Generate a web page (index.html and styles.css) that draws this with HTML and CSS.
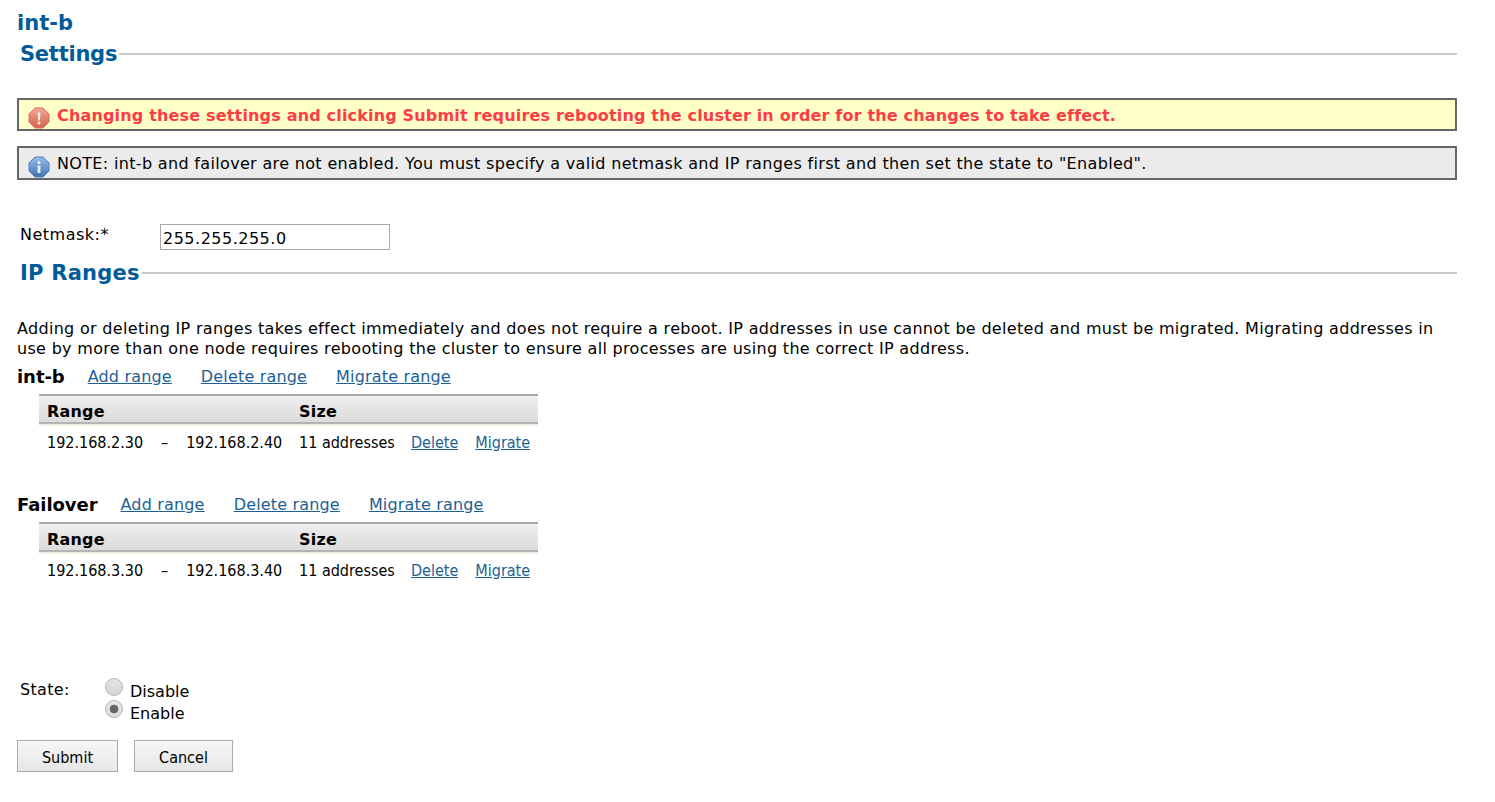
FILE: index.html
```html
<!DOCTYPE html>
<html lang="en">

<head>
    <meta charset="UTF-8">
    <title>int-b Settings</title>
    <link rel="stylesheet" href="styles.css">
</head>

<body>
    <h1 class="page-title">int-b</h1>

    <div class="section-head section-head-settings">
        <h2>Settings</h2>
        <span class="section-line"></span>
    </div>

    <div class="notice notice-warn">
        <svg class="notice-icon" viewBox="0 0 24 24" width="24" height="24">
            <defs>
                <linearGradient id="warnFill" x1="0" y1="0" x2="0" y2="1">
                    <stop offset="0" stop-color="#efa999" />
                    <stop offset="0.6" stop-color="#e47a66" />
                    <stop offset="1" stop-color="#d9644f" />
                </linearGradient>
            </defs>
            <path d="M8 2h8l6 6v8l-6 6H8l-6-6V8z" fill="url(#warnFill)" stroke="#d8715f" stroke-linejoin="round" />
            <path d="M10.6 6.5h2.8l-.5 8h-1.8z" fill="#fff" opacity="0.9" />
            <circle cx="12" cy="17" r="1.5" fill="#fff" opacity="0.9" />
        </svg>
        <span>Changing these settings and clicking Submit requires rebooting the cluster in order for the changes to take effect.</span>
    </div>

    <div class="notice notice-info">
        <svg class="notice-icon" viewBox="0 0 24 24" width="24" height="24">
            <defs>
                <linearGradient id="infoFill" x1="0" y1="0" x2="0" y2="1">
                    <stop offset="0" stop-color="#9abbe2" />
                    <stop offset="0.6" stop-color="#6492cc" />
                    <stop offset="1" stop-color="#3f72b4" />
                </linearGradient>
            </defs>
            <path d="M8 2h8l6 6v8l-6 6H8l-6-6V8z" fill="url(#infoFill)" stroke="#4f7fb8" stroke-linejoin="round" />
            <circle cx="12" cy="7.5" r="1.5" fill="#fff" opacity="0.85" />
            <rect x="10.6" y="10.5" width="2.8" height="7.5" fill="#fff" opacity="0.85" />
        </svg>
        <span>NOTE: int-b and failover are not enabled. You must specify a valid netmask and IP ranges first and then set the state to "Enabled".</span>
    </div>

    <div class="field-row">
        <label class="field-label" for="netmask">Netmask:*</label>
        <input class="text-input" type="text" id="netmask" value="255.255.255.0">
    </div>

    <div class="section-head section-head-ranges">
        <h2>IP Ranges</h2>
        <span class="section-line"></span>
    </div>

    <p class="intro">Adding or deleting IP ranges takes effect immediately and does not require a reboot. IP addresses in use cannot be deleted and must be migrated. Migrating addresses in use by more than one node requires rebooting the cluster to ensure all processes are using the correct IP address.</p>

    <div class="range-head">
        <strong>int-b</strong>
        <a href="#">Add range</a>
        <a href="#">Delete range</a>
        <a href="#">Migrate range</a>
    </div>
    <table class="range-table">
        <thead>
            <tr>
                <th class="col-range">Range</th>
                <th>Size</th>
                <th class="col-actions"></th>
            </tr>
        </thead>
        <tbody>
            <tr>
                <td class="col-range"><span class="ip">192.168.2.30</span><span class="dash">–</span><span class="ip">192.168.2.40</span></td>
                <td>11 addresses</td>
                <td class="col-actions"><a href="#">Delete</a><a href="#">Migrate</a></td>
            </tr>
        </tbody>
    </table>

    <div class="range-head range-head-second">
        <strong>Failover</strong>
        <a href="#">Add range</a>
        <a href="#">Delete range</a>
        <a href="#">Migrate range</a>
    </div>
    <table class="range-table">
        <thead>
            <tr>
                <th class="col-range">Range</th>
                <th>Size</th>
                <th class="col-actions"></th>
            </tr>
        </thead>
        <tbody>
            <tr>
                <td class="col-range"><span class="ip">192.168.3.30</span><span class="dash">–</span><span class="ip">192.168.3.40</span></td>
                <td>11 addresses</td>
                <td class="col-actions"><a href="#">Delete</a><a href="#">Migrate</a></td>
            </tr>
        </tbody>
    </table>

    <div class="state-row">
        <span class="state-label">State:</span>
        <div class="state-options">
            <label class="radio-line"><input type="radio" name="state"><span>Disable</span></label>
            <label class="radio-line"><input type="radio" name="state" checked><span>Enable</span></label>
        </div>
    </div>

    <div class="buttons">
        <button type="submit" class="btn-submit">Submit</button>
        <button type="button" class="btn-cancel">Cancel</button>
    </div>
</body>

</html>
```

FILE: styles.css
```css
:root {
    --heading-color: #005b9a;
    --link-color: #1c5f94;
    --line-color: #c8c8c8;
    --box-border: #666666;
}

* {
    box-sizing: border-box;
    margin: 0;
    padding: 0;
}

body {
    font-family: "DejaVu Sans", Verdana, sans-serif;
    font-size: 16px;
    letter-spacing: 0.31px;
    color: #000;
    background: #fff;
    padding: 11px 38px 0 17px;
}

a {
    color: var(--link-color);
}

.page-title {
    font-size: 21px;
    line-height: 24px;
    font-weight: bold;
    letter-spacing: 0;
    color: var(--heading-color);
}

.section-head {
    display: flex;
    align-items: center;
    padding-left: 3px;
    height: 26px;
    margin-top: 6px;
}

.section-head h2 {
    font-size: 21px;
    line-height: 26px;
    font-weight: bold;
    letter-spacing: 0;
    color: var(--heading-color);
    margin-right: 2px;
}

.section-head-settings h2 {
    letter-spacing: -0.25px;
}

.section-head-ranges h2 {
    letter-spacing: 0.25px;
}

.section-line {
    flex: 1;
    height: 2px;
    background: var(--line-color);
}

.section-head-ranges {
    margin-top: 10px;
}

.notice {
    display: flex;
    align-items: center;
    border: 2px solid var(--box-border);
    height: 33px;
    padding: 1px 0 0 8px;
    white-space: nowrap;
}

.notice-icon {
    flex: none;
    margin-right: 6px;
    margin-top: 6px;
}

.notice-warn {
    margin-top: 31px;
    background: #ffffc8;
    color: #ff3c46;
    font-weight: bold;
    letter-spacing: 0.17px;
}

.notice-info {
    height: 34px;
    margin-top: 15px;
    background: #ebebeb;
    letter-spacing: 0.335px;
}

.field-row {
    display: flex;
    align-items: flex-start;
    margin-top: 44px;
    padding-left: 3px;
}

.field-label {
    width: 140px;
    line-height: 22px;
    letter-spacing: 0.5px;
}

.text-input {
    width: 230px;
    height: 26px;
    border: 1px solid #a9a9a9;
    padding: 2px 2px 0;
    font: 16px "DejaVu Sans", Verdana, sans-serif;
    letter-spacing: 0.5px;
    color: #000;
}

.intro {
    margin-top: 33px;
    line-height: 20px;
}

.range-head {
    display: flex;
    align-items: center;
    height: 20px;
    margin-top: 7px;
    letter-spacing: 0.17px;
}

.range-head strong {
    font-size: 18px;
    letter-spacing: -0.05px;
    margin-right: 23px;
}

.range-head a {
    margin-right: 29px;
}

.range-head-second {
    margin-top: 36px;
}

.range-table {
    border-collapse: separate;
    border-spacing: 0;
    margin: 8px 0 0 22px;
    width: 499px;
    font-family: "DejaVu Sans Condensed", "DejaVu Sans", sans-serif;
    font-size: 16px;
    letter-spacing: 0;
}

.range-table th {
    height: 30px;
    text-align: left;
    font-family: "DejaVu Sans", Verdana, sans-serif;
    font-size: 16px;
    letter-spacing: 0.2px;
    padding: 4px 0 0 1px;
    border-top: 2px solid #a9a9a9;
    border-bottom: 2px solid #b4b4b4;
    background: linear-gradient(#f0f0f0, #e4e4e4 50%, #dcdcdc);
}

.range-table th.col-range {
    padding-left: 8px;
}

.range-table td {
    height: 34px;
    padding: 0 0 0 1px;
    border-top: 2px solid #f0f0e6;
    white-space: nowrap;
}

.range-table td.col-range {
    padding-left: 8px;
    width: 259px;
}

.range-table .dash {
    display: inline-block;
    width: 43px;
    text-align: center;
}

.col-actions {
    width: 143px;
}

.range-table td.col-actions a {
    margin-left: 15px;
}

.range-table td.col-actions a + a {
    margin-left: 17px;
}

.state-row {
    display: flex;
    margin-top: 94px;
    padding-left: 3px;
}

.state-label {
    width: 84px;
    line-height: 20px;
}

.state-options {
    display: flex;
    flex-direction: column;
    letter-spacing: 0;
}

.radio-line {
    display: flex;
    align-items: center;
    height: 22px;
    gap: 7px;
}

.radio-line input {
    appearance: none;
    width: 18px;
    height: 18px;
    margin: -8px 0 0 1px;
    border: 1px solid #b4b4b4;
    border-radius: 50%;
    background: linear-gradient(#e4e4e4, #d4d4d4);
}

.radio-line input:checked {
    background: radial-gradient(circle, #666 4px, transparent 4.7px), linear-gradient(#e8e8e8, #dcdcdc);
}

.buttons {
    display: flex;
    gap: 16px;
    margin-top: 16px;
}

.buttons button {
    height: 32px;
    padding-top: 2px;
    border: 1px solid #ababab;
    background: linear-gradient(#f7f7f7, #e6e6e6);
    font: 16px "DejaVu Sans Condensed", "DejaVu Sans", sans-serif;
    color: #000;
}

.btn-submit {
    width: 101px;
}

.btn-cancel {
    width: 99px;
}
```
